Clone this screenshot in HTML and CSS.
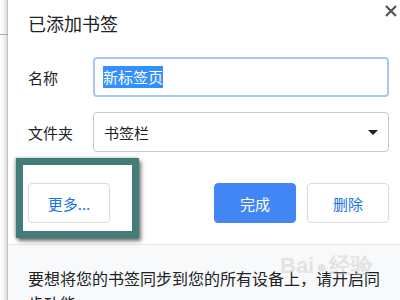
FILE: index.html
```html
<!DOCTYPE html>
<html>
<head>
	<meta charset="UTF-8">
	<title>已添加书签</title>
	<link rel="stylesheet" href="styles.css">
</head>
<body>
<div class="page">
	<div class="edge"><div class="edge-line"></div></div>
	<div class="dialog">
		<div class="head">
			<div class="title">已添加书签</div>
			<div class="close">
				<svg width="12" height="12" viewBox="0 0 12 12"><path d="M1 1L11 11M11 1L1 11" stroke="#555" stroke-width="2.2"/></svg>
			</div>
		</div>
		<div class="form">
			<div class="row">
				<div class="label">名称</div>
				<div class="field focus"><span class="sel">新标签页</span></div>
			</div>
			<div class="row">
				<div class="label">文件夹</div>
				<div class="field select"><span>书签栏</span><i class="caret"></i></div>
			</div>
		</div>
		<div class="btns">
			<div class="btn">更多...</div>
			<div class="space"></div>
			<div class="btn primary">完成</div>
			<div class="btn">删除</div>
		</div>
		<div class="foot">
			<p>要想将您的书签同步到您的所有设备上，请开启同步功能。</p>
			<div class="mark">Bai<span class="paw">&#9679;</span>经验</div>
		</div>
		<!-- 标注框 -->
		<div class="note"></div>
	</div>
</div>
</body>
</html>
```

FILE: styles.css
```css
*{
	box-sizing: border-box;
}
body{
	margin: 0;
	font-family: "Noto Sans CJK SC", "Noto Sans", sans-serif;
	color: #202124;
	background: #fff;
}
.page{
	display: flex;
	width: 400px;
	height: 300px;
	overflow: hidden;
}
.edge{
	width: 8px;
	flex: none;
	background: linear-gradient(to right, #fff 0, #f2f2f2 50%, #dcdcdc 85%, #c2c2c2 88%, #c2c2c2 100%);
}
.edge-line{
	margin-top: 34px;
	height: 1px;
	background: #a8a8a8;
}
.dialog{
	flex: 1;
	position: relative;
	display: flex;
	flex-direction: column;
	background: #fff;
}
.head{
	padding: 11px 11px 0 20px;
}
.title{
	font-size: 18px;
	line-height: 24px;
}
.close{
	position: absolute;
	top: 5px;
	right: 3px;
	width: 12px;
	height: 12px;
	display: flex;
}
.form{
	margin-top: 22px;
	padding: 0 11px 0 20px;
	display: flex;
	flex-direction: column;
	gap: 15px;
}
.row{
	display: flex;
	align-items: center;
	font-size: 15px;
}
.label{
	width: 65px;
	flex: none;
}
.field{
	flex: 1;
	height: 40px;
	display: flex;
	align-items: center;
	border-radius: 4px;
}
.focus{
	border: 2px solid #a9c6f5;
	padding-left: 8px;
}
.sel{
	background: #3390ff;
	color: #fff;
	line-height: 22px;
}
.select{
	border: 1px solid #c9c9c9;
	padding: 0 10px;
}
.select span{
	flex: 1;
}
.caret{
	width: 0;
	height: 0;
	border-left: 5px solid transparent;
	border-right: 5px solid transparent;
	border-top: 5px solid #222;
}
.btns{
	margin-top: 31px;
	padding: 0 11px 0 20px;
	display: flex;
	gap: 11px;
}
.space{
	flex: 1;
}
.btn{
	width: 82px;
	height: 40px;
	border: 1px solid #dadce0;
	border-radius: 4px;
	display: flex;
	align-items: center;
	justify-content: center;
	font-size: 15px;
	color: #1a73e8;
	background: #fff;
}
.btn.primary{
	background: #4285f4;
	border-color: #4285f4;
	color: #fff;
}
.foot{
	margin-top: 21px;
	flex: 1;
	position: relative;
	border-top: 1px solid #e6e6e6;
	background: #f8f9fa;
	padding: 21px 10px 0 20px;
}
.foot p{
	margin: 0;
	font-size: 16px;
	line-height: 25px;
}
.mark{
	position: absolute;
	left: 272px;
	top: 6px;
	font-family: "Liberation Sans", sans-serif;
	font-size: 22px;
	font-weight: bold;
	color: rgba(200,200,200,0.45);
}
.paw{
	font-size: 18px;
	margin: 0 2px;
}
.note{
	position: absolute;
	left: 8px;
	top: 158px;
	width: 123px;
	height: 80px;
	border: 7px solid #437d7a;
	box-shadow: 2px 3px 4px rgba(0,0,0,0.55), -1px 0 3px rgba(0,0,0,0.3);
}
```
